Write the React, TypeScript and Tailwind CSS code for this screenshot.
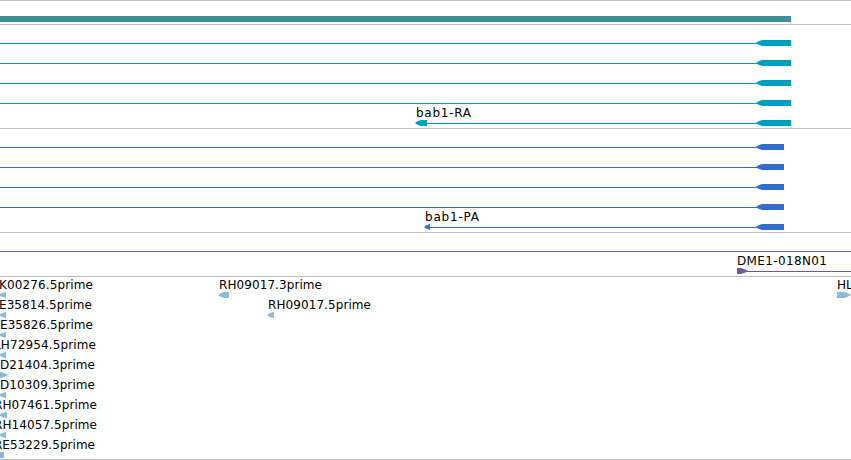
import React from 'react';

type Feature = {
  start: number;
  end: number;
  dir?: 'left' | 'right' | 'none';
  head?: number;
  label?: string;
  labelX?: number;
  labelWidth?: number;
  line?: [number, number];
};

type Track = {
  name: string;
  color: string;
  rows: Feature[][];
  className: string;
};

const WIDTH = 851;

const exon = (end: number, lineStart = 0): Feature => ({
  start: 756,
  end,
  dir: 'left',
  head: 6,
  line: [lineStart, 757],
});

const tracks: Track[] = [
  {
    name: 'gene',
    color: '#3d8f95',
    className: 'pb-[3px]',
    rows: [[{ start: 0, end: 791, dir: 'none' }]],
  },
  {
    name: 'transcript',
    color: '#009fc0',
    className: 'pb-[3px]',
    rows: [
      [exon(791)],
      [exon(791)],
      [exon(791)],
      [exon(791)],
      [exon(791, 426), { start: 415, end: 427, dir: 'left', head: 6, label: 'bab1-RA', labelX: 416, labelWidth: 55 }],
    ],
  },
  {
    name: 'cds',
    color: '#326dcc',
    className: 'pb-[3px]',
    rows: [
      [exon(784)],
      [exon(784)],
      [exon(784)],
      [exon(784)],
      [exon(784, 429), { start: 424, end: 430, dir: 'left', head: 6, label: 'bab1-PA', labelX: 425, labelWidth: 54 }],
    ],
  },
  {
    name: 'insertion',
    color: '#7454a6',
    className: 'pb-[3px]',
    rows: [
      [{ start: 0, end: 0, line: [0, WIDTH] }],
      [{ start: 737, end: 748, dir: 'right', head: 7, label: 'DME1-018N01', labelWidth: 90, line: [746, WIDTH] }],
    ],
  },
  {
    name: 'est',
    color: '#88bbdc',
    className: 'pb-[2px]',
    rows: [
      [
        { start: -1, end: 6, dir: 'left', head: 7, label: 'K00276.5prime', labelX: -1, labelWidth: 94 },
        { start: 218, end: 229, dir: 'left', head: 6, label: 'RH09017.3prime', labelX: 219, labelWidth: 103 },
        { start: 837, end: 851, dir: 'right', head: 7, label: 'HL' },
      ],
      [
        { start: -1, end: 6, dir: 'left', head: 7, label: 'E35814.5prime', labelX: -1, labelWidth: 93 },
        { start: 267, end: 274, dir: 'left', head: 6, label: 'RH09017.5prime', labelX: 268, labelWidth: 103 },
      ],
      [{ start: -1, end: 6, dir: 'left', head: 7, label: 'E35826.5prime', labelX: 0, labelWidth: 93 }],
      [{ start: -1, end: 6, dir: 'left', head: 7, label: 'LH72954.5prime', labelX: -6, labelWidth: 102 }],
      [{ start: 0, end: 8, dir: 'right', head: 7, label: 'D21404.3prime', labelX: 0, labelWidth: 95 }],
      [{ start: -1, end: 6, dir: 'left', head: 7, label: 'D10309.3prime', labelX: 0, labelWidth: 95 }],
      [{ start: -1, end: 7, dir: 'left', head: 7, label: 'RH07461.5prime', labelX: -6, labelWidth: 103 }],
      [{ start: -1, end: 6, dir: 'left', head: 7, label: 'RH14057.5prime', labelX: -6, labelWidth: 103 }],
      [{ start: 0, end: 4, dir: 'none', label: 'RE53229.5prime', labelX: -6, labelWidth: 101 }],
    ],
  },
];

function glyphPoints({ start, end, dir, head = 0 }: Feature) {
  if (dir === 'left') {
    return `${start},18 ${start + 2},16.5 ${start + head},15 ${end},15 ${end},21 ${start + head},21 ${start + 2},19.5`;
  }
  if (dir === 'right') {
    return `${start},15 ${end - head},15 ${end - 2},16.7 ${end},18 ${end - 2},19.3 ${end - head},21 ${start},21`;
  }
  return `${start},15 ${end},15 ${end},21 ${start},21`;
}

function FeatureRow({ features, color }: { features: Feature[]; color: string }) {
  return (
    <svg width={WIDTH} height={20} className="block overflow-visible">
      {features.map((f, i) => (
        <g key={i}>
          {f.line && <rect x={f.line[0]} y={18} width={f.line[1] - f.line[0]} height={1} fill={color} />}
          {f.end > f.start && <polygon points={glyphPoints(f)} fill={color} />}
          {f.label && (
            <text x={f.labelX ?? f.start} y={12} textLength={f.labelWidth} className="fill-black text-[12px]">
              {f.label}
            </text>
          )}
        </g>
      ))}
    </svg>
  );
}

export default function App() {
  return (
    <div className="w-[851px] h-[460px] overflow-hidden bg-white border-b border-[#bebebe] font-['DejaVu_Sans',sans-serif]">
      {tracks.map((track) => (
        <div key={track.name} className={`border-t border-[#bebebe] ${track.className}`}>
          {track.rows.map((features, i) => (
            <FeatureRow key={i} features={features} color={track.color} />
          ))}
        </div>
      ))}
    </div>
  );
}
